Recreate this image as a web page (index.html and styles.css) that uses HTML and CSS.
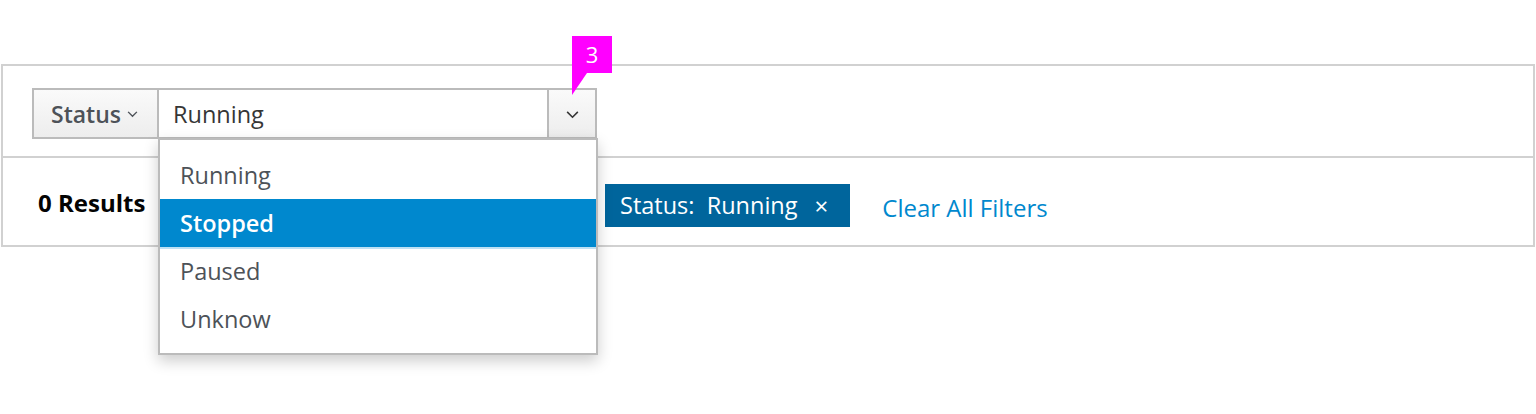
FILE: index.html
```html
<!DOCTYPE html>
<html lang="en">
<head>
<meta charset="utf-8">
<title>Filter toolbar</title>
<link rel="stylesheet" href="styles.css">
</head>
<body>
<div class="toolbar">
  <div class="row row-filter">
    <div class="filter-group">
      <button class="filter-type">Status<svg class="chev-sm" viewBox="0 0 12 8" width="11" height="7"><polyline points="1,1 6,6 11,1" fill="none" stroke="#4d5258" stroke-width="1.6"/></svg></button>
      <div class="select">
        <div class="select-value">Running</div>
        <button class="select-toggle"><svg viewBox="0 0 14 9" width="13" height="8"><polyline points="1,1 7,7 13,1" fill="none" stroke="#363636" stroke-width="1.8"/></svg></button>
        <div class="badge"><span class="badge-num">3</span><svg class="badge-tail" viewBox="0 0 15 22" width="15" height="22"><polygon points="0,0 15,0 0,22" fill="#ff00ff"/></svg></div>
        <ul class="menu">
          <li class="item">Running</li>
          <li class="item active">Stopped</li>
          <li class="item">Paused</li>
          <li class="item">Unknow</li>
        </ul>
      </div>
    </div>
  </div>
  <div class="row row-results">
    <div class="results">0 Results</div>
    <div class="chip"><span>Status:&nbsp; Running</span><span class="chip-x">×</span></div>
    <a class="clear" href="#">Clear All Filters</a>
  </div>
</div>
</body>
</html>
```

FILE: styles.css
```css
* { box-sizing: border-box; }
html, body { margin: 0; padding: 0; background: #fff; }
body {
  font-family: "Open Sans", "Noto Sans", sans-serif;
  min-height: 414px;
}

.toolbar {
  margin: 64px 1px 0 1px;
  border: 2px solid #d1d1d1;
}

.row-filter {
  height: 92px;
  padding: 22px 0 0 29px;
  border-bottom: 2px solid #d1d1d1;
}

.filter-group { display: flex; }

.filter-type {
  display: flex;
  align-items: center;
  width: 126px;
  height: 51px;
  padding: 0 0 0 17px;
  border: 2px solid #bbbbbb;
  border-right: 1px solid #bbbbbb;
  background: linear-gradient(#fafafa, #ededed);
  font-family: "Open Sans", "Noto Sans", sans-serif;
  font-size: 23px;
  font-weight: 600;
  color: #4d5258;
  cursor: pointer;
}
.chev-sm { margin-left: 6px; margin-top: 2px; }

.select {
  position: relative;
  display: flex;
  height: 51px;
}
.select-value {
  width: 389px;
  height: 51px;
  padding: 0 0 0 14px;
  border: 2px solid #bbbbbb;
  border-right: 0;
  border-left: 1px solid #bbbbbb;
  display: flex;
  align-items: center;
  font-size: 23.5px;
  color: #363636;
  background: #fff;
}
.select-toggle {
  width: 50px;
  height: 51px;
  border: 2px solid #bbbbbb;
  background: linear-gradient(#fafafa, #ededed);
  display: flex;
  align-items: center;
  justify-content: center;
  padding: 2px 0 0 0;
  cursor: pointer;
}

.badge {
  position: absolute;
  left: 414px;
  top: -52px;
  width: 40px;
  height: 37px;
  background: #ff00ff;
  color: #fff;
  font-size: 22px;
  line-height: 37px;
  text-align: center;
}
.badge-tail { position: absolute; left: 0; top: 37px; display: block; }

.menu {
  position: absolute;
  left: 0;
  top: 50px;
  width: 440px;
  margin: 0;
  padding: 11px 0 10px;
  list-style: none;
  background: #fff;
  border: 2px solid #bbbbbb;
  box-shadow: 0 6px 14px rgba(0, 0, 0, 0.2);
  z-index: 2;
}
.item {
  height: 48px;
  padding-left: 20px;
  display: flex;
  align-items: center;
  font-size: 23.5px;
  color: #4d5258;
}
.item.active {
  background: #0088ce;
  color: #fff;
  font-weight: 600;
  box-shadow: 0 2px 0 #bee1f4;
  position: relative;
}

.row-results {
  height: 87px;
  display: flex;
  align-items: center;
  padding: 0 0 0 35px;
}
.results {
  width: 567px;
  font-size: 24px;
  font-weight: 700;
  color: #030303;
  margin-top: 2px;
}
.chip {
  display: flex;
  align-items: center;
  height: 43px;
  padding: 0 22px 0 15px;
  background: #00659c;
  color: #fff;
  font-size: 23.5px;
  margin-top: 7px;
}
.chip-x { margin-left: 17px; font-size: 24px; }
.clear {
  margin-left: 32px;
  margin-top: 11px;
  font-size: 24px;
  color: #0088ce;
  text-decoration: none;
}
```
